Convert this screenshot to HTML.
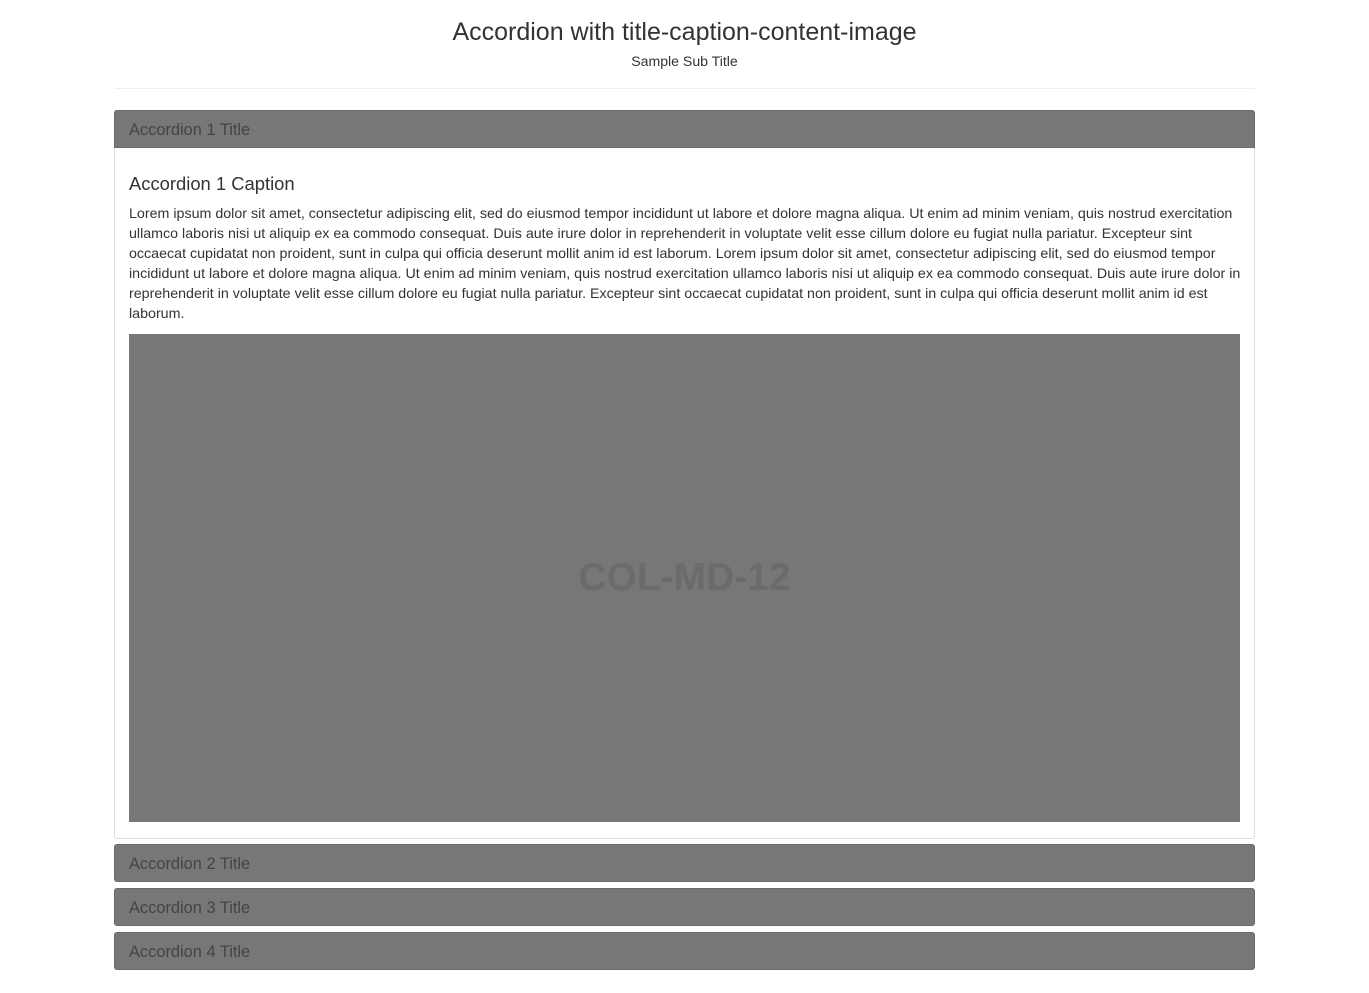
<!DOCTYPE html>
<html><head><meta charset="utf-8"><style>
body{margin:0;background:#fff;font-family:"Liberation Sans",Arial,sans-serif;color:#333;width:1369px;height:993px;position:relative;overflow:hidden}
.a{position:absolute}
.h1{left:0;width:1369px;top:16px;text-align:center;font-size:25px;line-height:32px;color:#333}
.sub{left:0;width:1369px;top:52px;text-align:center;font-size:14.1px;line-height:18px}
.hr{left:114px;width:1141px;top:88px;border-top:1px solid #eee}
.hd{left:114px;height:36px;background:#777;border:1px solid #6a6a6a;border-radius:3px;font-size:16.4px;line-height:38px;color:#444;padding-left:14px;box-sizing:content-box;width:1125px}
.panel{left:114px;top:110px;width:1139px;height:727px;border:1px solid #ddd;border-radius:3px}
.cap{left:129px;top:173px;font-size:18.4px;line-height:22px}
.txt{left:129px;top:204px;width:1114px;font-size:14.25px;line-height:20px}
.img{left:129px;top:334px;width:1111px;height:488px;background:#777;display:flex;align-items:center;justify-content:center;font-size:39px;font-weight:bold;color:#6b6b6b;font-family:"Liberation Sans",sans-serif}
</style></head><body>
<div class="a h1">Accordion with title-caption-content-image</div>
<div class="a sub">Sample Sub Title</div>
<div class="a hr"></div>
<div class="a panel"></div>
<div class="a hd" style="top:110px;border-radius:3px 3px 0 0">Accordion 1 Title</div>
<div class="a cap">Accordion 1 Caption</div>
<div class="a txt">Lorem ipsum dolor sit amet, consectetur adipiscing elit, sed do eiusmod tempor incididunt ut labore et dolore magna aliqua. Ut enim ad minim veniam, quis nostrud exercitation ullamco laboris nisi ut aliquip ex ea commodo consequat. Duis aute irure dolor in reprehenderit in voluptate velit esse cillum dolore eu fugiat nulla pariatur. Excepteur sint occaecat cupidatat non proident, sunt in culpa qui officia deserunt mollit anim id est laborum. Lorem ipsum dolor sit amet, consectetur adipiscing elit, sed do eiusmod tempor incididunt ut labore et dolore magna aliqua. Ut enim ad minim veniam, quis nostrud exercitation ullamco laboris nisi ut aliquip ex ea commodo consequat. Duis aute irure dolor in reprehenderit in voluptate velit esse cillum dolore eu fugiat nulla pariatur. Excepteur sint occaecat cupidatat non proident, sunt in culpa qui officia deserunt mollit anim id est laborum.</div>
<div class="a img">COL-MD-12</div>
<div class="a hd" style="top:844px">Accordion 2 Title</div>
<div class="a hd" style="top:888px">Accordion 3 Title</div>
<div class="a hd" style="top:932px">Accordion 4 Title</div>
</body></html>
